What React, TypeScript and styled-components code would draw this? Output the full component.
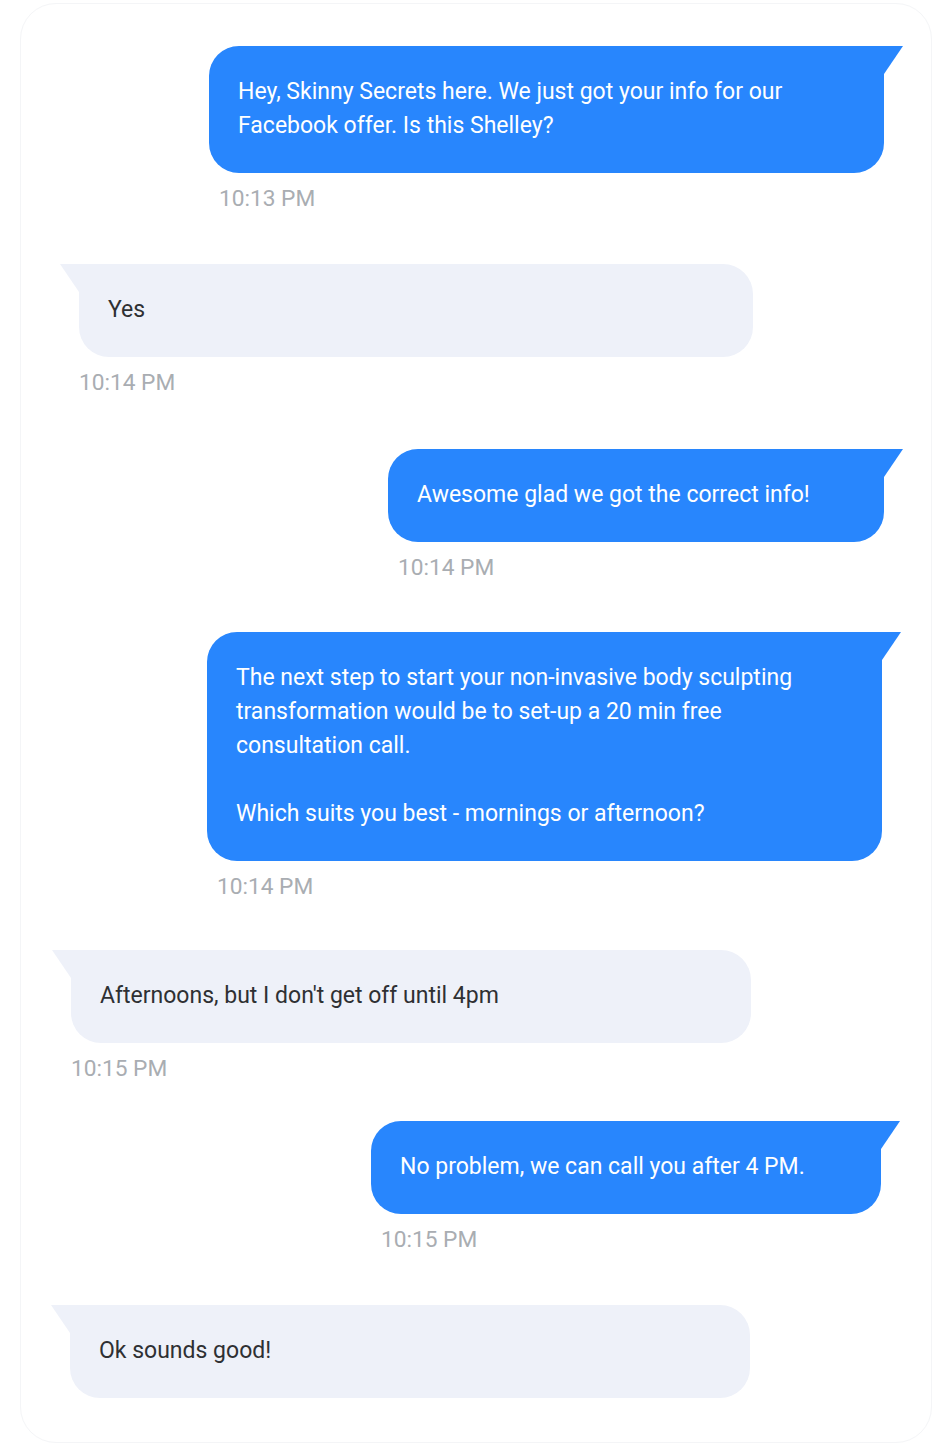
import React from "react";
import styled, { createGlobalStyle } from "styled-components";

const GlobalStyle = createGlobalStyle`
  html, body {
    margin: 0;
    padding: 0;
    background: #ffffff;
  }
  body {
    font-family: Roboto, "Noto Sans", "Liberation Sans", sans-serif;
    -webkit-font-smoothing: antialiased;
  }
`;

type Side = "sent" | "recv";

const Card = styled.div`
  box-sizing: border-box;
  margin: 3px 20px 3px 20px;
  padding: 42px 0 44px 0;
  border: 1px solid #f4f5f7;
  border-radius: 36px;
  display: flex;
  flex-direction: column;
`;

const Group = styled.div<{ $indent: number; $gap: number }>`
  display: flex;
  flex-direction: column;
  align-items: flex-start;
  margin-left: ${(p) => p.$indent}px;
  margin-top: ${(p) => p.$gap}px;
`;

const Bubble = styled.div<{ $side: Side; $width: number }>`
  position: relative;
  box-sizing: border-box;
  width: ${(p) => p.$width}px;
  padding: 29px 29px 30px 29px;
  font-size: 23px;
  line-height: 34px;
  white-space: pre-line;
  color: ${(p) => (p.$side === "sent" ? "#ffffff" : "#2e3033")};
  background: ${(p) => (p.$side === "sent" ? "#2886fd" : "#eef1f9")};
  border-radius: ${(p) =>
    p.$side === "sent" ? "30px 0 30px 30px" : "0 30px 30px 30px"};

  &::before {
    content: "";
    position: absolute;
    top: 0;
    width: 19px;
    height: 28px;
    background: inherit;
    ${(p) =>
      p.$side === "sent"
        ? `right: -19px; clip-path: polygon(0 0, 100% 0, 0 100%);`
        : `left: -19px; clip-path: polygon(0 0, 100% 0, 100% 100%);`}
  }
`;

const Time = styled.div<{ $side: Side }>`
  margin-top: 12px;
  margin-left: ${(p) => (p.$side === "sent" ? 10 : 0)}px;
  font-size: 22.7px;
  line-height: 28px;
  color: #a9adb2;
`;

type Msg = {
  side: Side;
  indent: number;
  width: number;
  gap: number;
  text: string;
  time?: string;
};

const messages: Msg[] = [
  {
    side: "sent",
    indent: 188,
    width: 675,
    gap: 0,
    text: "Hey, Skinny Secrets here. We just got your info for our\nFacebook offer. Is this Shelley?",
    time: "10:13 PM",
  },
  { side: "recv", indent: 58, width: 674, gap: 51, text: "Yes", time: "10:14 PM" },
  {
    side: "sent",
    indent: 367,
    width: 496,
    gap: 52,
    text: "Awesome glad we got the correct info!",
    time: "10:14 PM",
  },
  {
    side: "sent",
    indent: 186,
    width: 675,
    gap: 50,
    text:
      "The next step to start your non-invasive body sculpting\ntransformation would be to set-up a 20 min free\nconsultation call.\n\nWhich suits you best - mornings or afternoon?",
    time: "10:14 PM",
  },
  {
    side: "recv",
    indent: 50,
    width: 680,
    gap: 49,
    text: "Afternoons, but I don't get off until 4pm",
    time: "10:15 PM",
  },
  {
    side: "sent",
    indent: 350,
    width: 510,
    gap: 38,
    text: "No problem, we can call you after 4 PM.",
    time: "10:15 PM",
  },
  { side: "recv", indent: 49, width: 680, gap: 51, text: "Ok sounds good!" },
];

export default function App() {
  return (
    <>
      <GlobalStyle />
      <Card>
        {messages.map((m, i) => (
          <Group key={i} $indent={m.indent} $gap={m.gap}>
            <Bubble $side={m.side} $width={m.width}>
              {m.text}
            </Bubble>
            {m.time && <Time $side={m.side}>{m.time}</Time>}
          </Group>
        ))}
      </Card>
    </>
  );
}
